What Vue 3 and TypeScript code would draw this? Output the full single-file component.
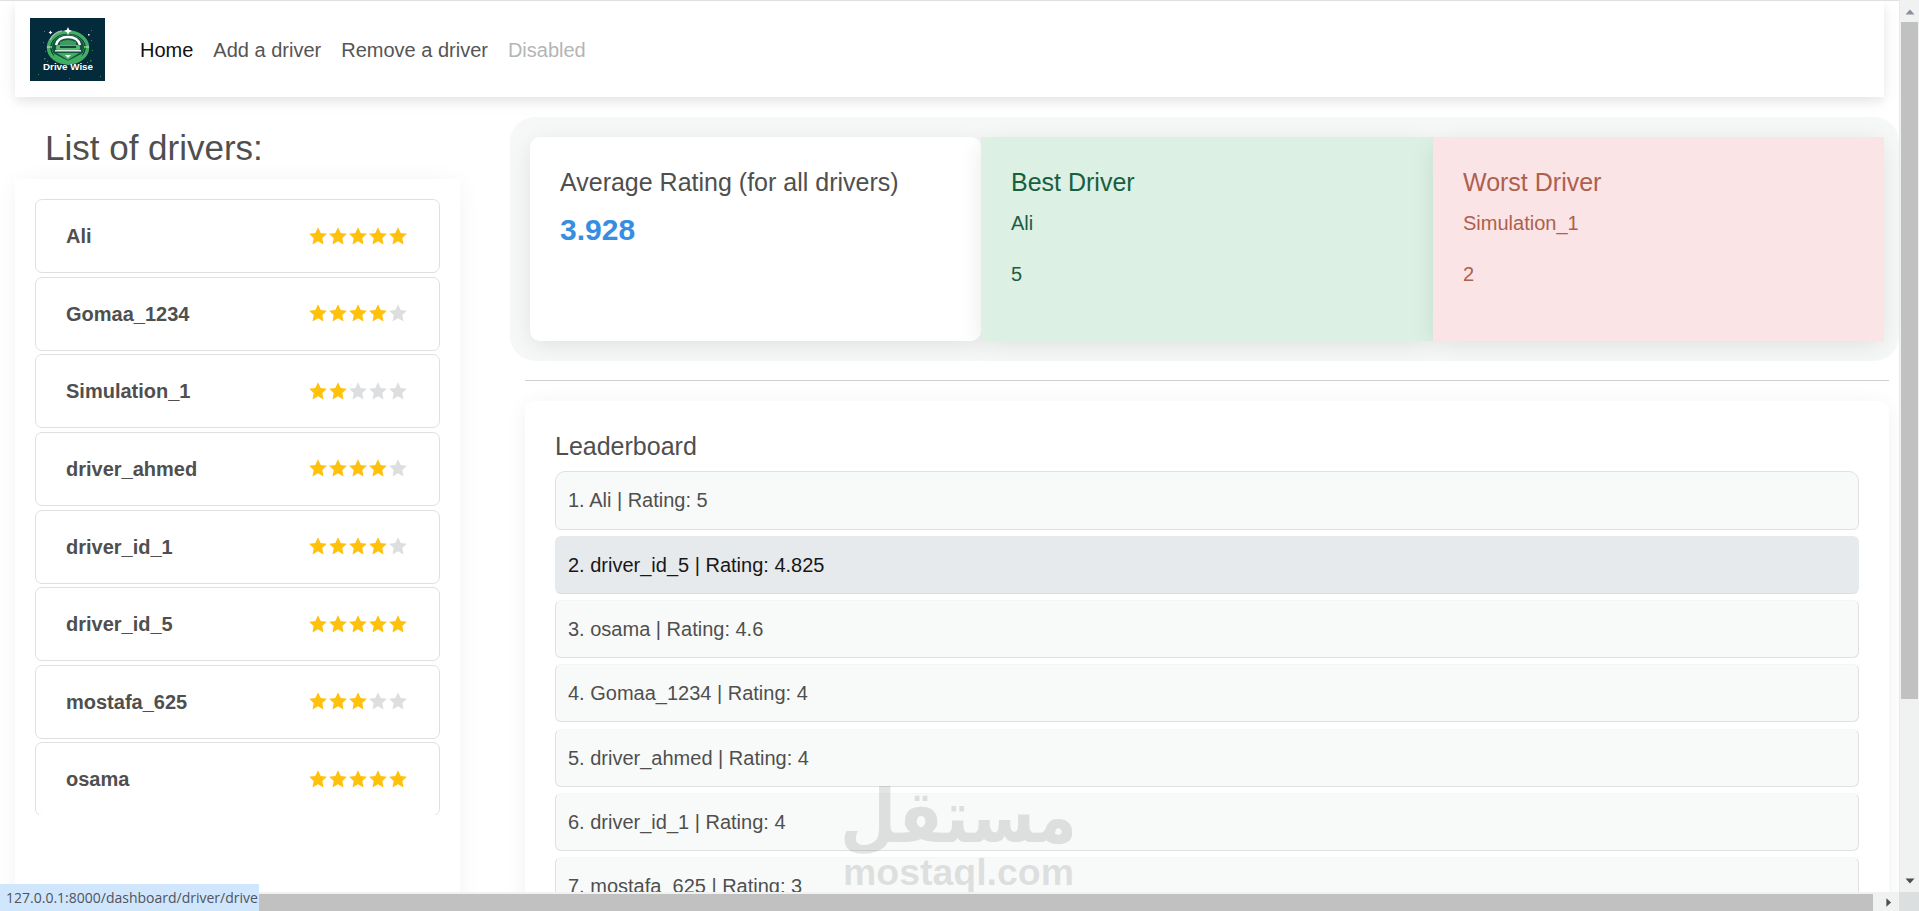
<script setup lang="ts">
interface Driver { name: string; stars: number }
interface Leader { name: string; rating: string }

const links = [
  { label: 'Home', state: 'active' },
  { label: 'Add a driver', state: '' },
  { label: 'Remove a driver', state: '' },
  { label: 'Disabled', state: 'disabled' },
]

const drivers: Driver[] = [
  { name: 'Ali', stars: 5 },
  { name: 'Gomaa_1234', stars: 4 },
  { name: 'Simulation_1', stars: 2 },
  { name: 'driver_ahmed', stars: 4 },
  { name: 'driver_id_1', stars: 4 },
  { name: 'driver_id_5', stars: 5 },
  { name: 'mostafa_625', stars: 3 },
  { name: 'osama', stars: 5 },
]

const leaders: Leader[] = [
  { name: 'Ali', rating: '5' },
  { name: 'driver_id_5', rating: '4.825' },
  { name: 'osama', rating: '4.6' },
  { name: 'Gomaa_1234', rating: '4' },
  { name: 'driver_ahmed', rating: '4' },
  { name: 'driver_id_1', rating: '4' },
  { name: 'mostafa_625', rating: '3' },
]
const highlighted = 1
</script>

<template>
  <div class="window">
    <div class="view">
      <nav class="navbar">
        <svg class="logo" viewBox="0 0 75 63" role="img" aria-label="Drive Wise">
          <rect width="75" height="63" fill="#042b3b" />
          <g fill="#3fa65c" opacity=".8">
            <rect x="13" y="24" width="1" height="1" /><rect x="15" y="33" width="1" height="1" />
            <rect x="14" y="40" width="1.5" height="1.5" /><rect x="17" y="43" width="1" height="1" />
            <rect x="61" y="22" width="1" height="1" /><rect x="60" y="42" width="1.5" height="1.5" />
            <rect x="57" y="44" width="1" height="1" /><rect x="62" y="32" width="1" height="1" />
            <rect x="14" y="13" width="1" height="1" /><rect x="61" y="12" width="1" height="1" />
            <rect x="39" y="60" width="1" height="1" /><rect x="70" y="58" width="1" height="1" />
            <rect x="8" y="56" width="1" height="1" />
          </g>
          <ellipse cx="38" cy="29.500" rx="19.500" ry="15.500" fill="none" stroke="#43ad61" stroke-width="3.500" />
          <ellipse cx="38" cy="29.500" rx="16.500" ry="13" fill="#12563f" stroke="#2b8550" stroke-width="1" />
          <path d="M20 22Q24 14 32 13" fill="none" stroke="#9fb9b0" stroke-width="1.6" />
          <path d="M26 27Q28 19 38 19Q48 19 50 27" fill="none" stroke="#fff" stroke-width="2.4" />
          <path d="M30 24Q38 20 46 24V27H30Z" fill="#3b9c5b" />
          <rect x="26" y="27" width="24" height="5" rx="1.5" fill="#58b86f" />
          <rect x="30" y="28" width="16" height="2" fill="#16473d" />
          <rect x="25" y="32" width="26" height="1.5" fill="#dce6e4" />
          <path d="M23 35L38 43L53 35L50 42L38 47L26 42Z" fill="#43ad61" />
          <path d="M27 35H49L38 42Z" fill="#43ad61" />
          <path d="M35 37H41L38 40Z" fill="#fff" />
          <path d="M17 29H22M54 29H59" stroke="#d8e8dd" stroke-width="1" />
          <path d="M38 9L39.2 11.8L42 13L39.2 14.2L38 17L36.8 14.2L34 13L36.8 11.8Z" fill="#fff" />
          <path d="M20.500 12.500l.7 1.300 1.300.7-1.300.7-.7 1.300-.7-1.300-1.300-.7 1.300-.7Z" fill="#fff" />
          <rect x="58" y="16" width="1.500" height="1.500" fill="#fff" />
          <text x="13" y="52" font-size="8.500" textLength="50" lengthAdjust="spacingAndGlyphs">Drive Wise</text>
        </svg>
        <a v-for="l in links" :key="l.label" class="link" :class="l.state">{{ l.label }}</a>
      </nav>

      <div class="columns">
        <aside class="side">
          <h3 class="side-title">List of drivers:</h3>
          <div class="side-card">
            <div class="driver-list">
              <div v-for="d in drivers" :key="d.name" class="driver">
                <span>{{ d.name }}</span>
                <span class="stars">
                  <svg v-for="n in 5" :key="n" viewBox="0 0 20 20" :class="{ on: n <= d.stars }">
                    <path d="M10 1.300L12.700 7.100L18.900 7.800L14.300 12.100L15.500 18.400L10 15.300L4.500 18.400L5.700 12.100L1.100 7.800L7.300 7.100Z" />
                  </svg>
                </span>
              </div>
            </div>
          </div>
        </aside>

        <main class="content">
          <section class="summary">
            <article class="tile average">
              <h5>Average Rating (for all drivers)</h5>
              <p class="value">3.928</p>
            </article>
            <article class="tile best">
              <h5>Best Driver</h5>
              <p>Ali</p>
              <p>5</p>
            </article>
            <article class="tile worst">
              <h5>Worst Driver</h5>
              <p>Simulation_1</p>
              <p>2</p>
            </article>
          </section>
          <hr />
          <section class="board">
            <h5>Leaderboard</h5>
            <ul>
              <li v-for="(l, i) in leaders" :key="l.name" :class="{ hot: i === highlighted }">
                {{ i + 1 }}. {{ l.name }} | Rating: {{ l.rating }}
              </li>
            </ul>
          </section>
        </main>
      </div>

      <svg class="watermark" viewBox="0 0 240 112">
        <g transform="translate(119.500 54.500) scale(.900 1.020)">
          <text class="wm-ar" x="0" y="0" text-anchor="middle">مستقل</text>
        </g>
        <text class="wm-en" x="4" y="97.500" textLength="231" lengthAdjust="spacingAndGlyphs">mostaql.com</text>
      </svg>
    </div>

    <div class="vbar">
      <svg viewBox="0 0 20 20"><path class="dim" d="M5.500 13.500L10 8.500L14.500 13.500Z" /></svg>
      <div class="vthumb"></div>
      <svg viewBox="0 0 20 20"><path d="M5.500 7.500L10 12.500L14.500 7.500Z" /></svg>
    </div>
    <div class="hbar">
      <div class="hthumb"></div>
      <svg viewBox="0 0 20 20"><path d="M7.500 5L13 10L7.500 15Z" /></svg>
    </div>
    <div class="corner"></div>
    <div class="status">127.0.0.1:8000/dashboard/driver/drive</div>
  </div>
</template>

<style>
body { margin: 0; overflow: hidden; }
</style>

<style scoped>
* { box-sizing: border-box; }
.window {
  position: relative;
  display: grid;
  grid-template-columns: 1899px 20px;
  grid-template-rows: 892px 19px;
  width: 1919px;
  height: 911px;
  overflow: hidden;
  background: #fff;
  color: #4f4f4f;
  font: 20px/32px "Liberation Sans", Arial, sans-serif;
}
h3, h5, p, ul { margin: 0; padding: 0; font-weight: 400; }
.view { position: relative; overflow: hidden; border-top: 1px solid #dfe1e1; }
.navbar {
  display: flex;
  align-items: center;
  height: 96px;
  margin: 0 15px;
  padding: 0 15px;
  background: #fff;
  box-shadow: 0 5px 8px rgba(0, 0, 0, .06), 0 3px 22px -2px rgba(0, 0, 0, .07);
}
.logo { width: 75px; height: 63px; margin: 0 25px 0 0; }
.logo text { fill: #fff; font-family: "Liberation Sans", Arial, sans-serif; font-weight: 700; }
.link { padding: 0 10px; margin-top: 2px; color: #555; white-space: nowrap; }
.link.active { color: #101010; }
.link.disabled { color: #b5b5b5; }
.columns { display: flex; }
.side { width: 445px; margin-left: 15px; padding-top: 30px; }
.side-title { height: 52px; padding-left: 30px; font-size: 35px; line-height: 42px; }
.side-card {
  height: 900px;
  padding: 20px;
  background: #fff;
  box-shadow: 0 3px 25px -2px rgba(0, 0, 0, .06);
}
.driver-list {
  display: flex;
  flex-direction: column;
  gap: 3.650px;
  height: 616px;
  overflow: hidden;
}
.driver {
  display: flex;
  flex: none;
  align-items: center;
  justify-content: space-between;
  height: 74px;
  padding: 0 31px 0 30px;
  border: 1px solid #e0e0e0;
  border-radius: 7px;
  font-weight: 700;
}
.stars { display: flex; }
.stars svg { width: 20px; height: 20px; margin-top: -1px; fill: #dcdee0; }
.stars svg.on { fill: #ffc10c; }
.content { width: 1389px; margin-left: 50px; padding-top: 20px; }
.summary {
  display: grid;
  grid-template-columns: 451px 452px 451px;
  width: 1389px;
  height: 244px;
  padding: 20px;
  border-radius: 25px;
  background: #f6f8f7;
}
.tile { padding: 30px; box-shadow: 0 5px 25px -3px rgba(0, 0, 0, .11); }
h5 { font-size: 25px; line-height: 30px; margin-bottom: 10px; }
.tile p { line-height: 32px; margin-bottom: 19px; }
.average { border-radius: 10px; background: #fff; }
.tile .value { padding-top: 7px; color: #358ee2; font-size: 30px; font-weight: 700; }
.best { background: #dcf0e3; color: #1c5d45; }
.best h5 { color: #17603f; }
.worst { background: #fae4e6; color: #ad604e; }
hr { height: 1px; margin: 19px 10px 20px 15px; border: 0; background: #cdd0ce; }
.board {
  width: 1364px;
  height: 600px;
  margin-left: 15px;
  padding: 30px;
  border-radius: 10px;
  background: #fff;
  box-shadow: 0 3px 25px -2px rgba(0, 0, 0, .07);
}
.board ul { display: flex; flex-direction: column; gap: 6.150px; list-style: none; }
.board li {
  flex: none;
  height: 58px;
  padding: 12px;
  border: 1px solid #dfe2e1;
  border-top-color: #f4f6f5;
  border-radius: 6px;
  background: #f8faf9;
}
.board li:first-child { height: 59px; border-top-color: #dfe2e1; border-radius: 10px 10px 6px 6px; }
.board li.hot { border-color: #e7eaed #e7eaed #dcdfe2; background: #e7eaed; color: #171717; }
.watermark {
  position: absolute;
  left: 839px;
  top: 786px;
  width: 240px;
  height: 112px;
  overflow: visible;
  fill: #000;
  opacity: .1;
}
.wm-ar { font: 700 72px "DejaVu Sans", sans-serif; }
.wm-en { font: 700 37.500px "Liberation Sans", Arial, sans-serif; }
.vbar {
  display: flex;
  flex-direction: column;
  align-items: center;
  padding-top: 1px;
  border-left: 1px solid #e9eaea;
  background: #f0f1f1;
}
.vbar svg, .hbar svg { flex: none; width: 20px; height: 20px; fill: #4d4d4d; }
.vbar .dim { fill: #8f8c9c; }
.vthumb { width: 17px; height: 677px; margin: 1px 0 172px; background: #c1c1c1; }
.hbar { display: flex; padding-top: 2px; background: #f0f1f1; }
.hbar svg { width: 19px; height: 17px; margin-left: 6px; }
.hthumb { width: 1873px; height: 17px; background: #c1c1c1; }
.corner { background: #dcdfe0; }
.status {
  position: absolute;
  left: 0;
  bottom: 0;
  width: 259px;
  height: 27px;
  padding-left: 6px;
  overflow: hidden;
  background: #cfe6fc;
  color: #50545c;
  font: 14px/28px "Open Sans", "Noto Sans", sans-serif;
  white-space: nowrap;
}
</style>
